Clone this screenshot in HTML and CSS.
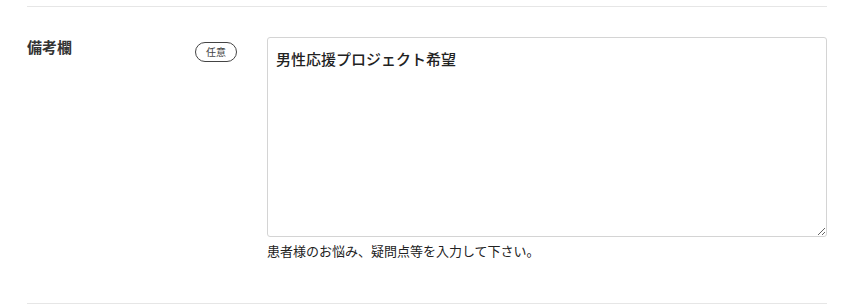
FILE: index.html
```html
<!DOCTYPE html>
<html lang="ja">
<head>
  <meta charset="UTF-8" />
  <title>備考欄</title>
  <link rel="stylesheet" href="styles.css">
</head>
<body>
  <div class="form-wrap">
    <div class="form-row">
      <div class="form-label">備考欄</div>
      <div class="form-badge"><span class="badge">任意</span></div>
      <div class="form-field">
        <textarea class="note" name="note">男性応援プロジェクト希望</textarea>
        <p class="help">患者様のお悩み、疑問点等を入力して下さい。</p>
      </div>
    </div>
  </div>
</body>
</html>
```

FILE: styles.css
```css
html, body {
  margin: 0;
  padding: 0;
  background: #fff;
}
body {
  font-family: "Noto Sans CJK JP", "Noto Sans", sans-serif;
  color: #222;
}
.form-wrap {
  width: 800px;
  margin: 6px 0 0 27px;
}
.form-row {
  display: flex;
  border-top: 1px solid #e6e6e6;
  border-bottom: 1px solid #e6e6e6;
  padding: 30px 0 42px;
}
.form-label {
  width: 168px;
  font-size: 15px;
  font-weight: 700;
  line-height: 20px;
  color: #333;
}
.form-badge {
  width: 72px;
}
.badge {
  display: inline-block;
  box-sizing: border-box;
  width: 42px;
  height: 20px;
  border: 1px solid #444;
  border-radius: 10px;
  font-size: 10px;
  line-height: 18px;
  text-align: center;
  color: #444;
}
.form-field {
  width: 560px;
}
.note {
  display: block;
  box-sizing: border-box;
  width: 560px;
  height: 200px;
  margin: 0;
  padding: 9px 8px;
  border: 1px solid #d4d4d4;
  border-radius: 3px;
  font-family: "Noto Sans CJK JP", "Noto Sans", sans-serif;
  font-size: 15px;
  line-height: 24px;
  font-weight: 500;
  color: #222;
  resize: vertical;
}
.help {
  margin: 4px 0 0;
  font-size: 13px;
  line-height: 20px;
  color: #222;
}
```
